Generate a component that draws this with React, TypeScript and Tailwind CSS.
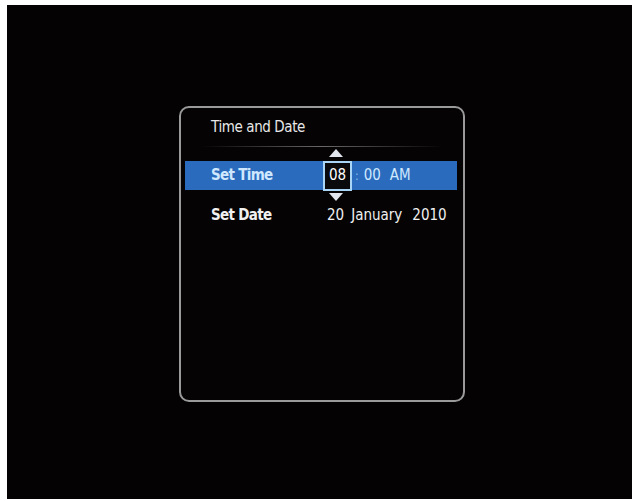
export default function App() {
  return (
    <div className="w-[637px] h-[501px] bg-white pl-[7px] pt-[5px]" style={{ fontFamily: '"DejaVu Sans Condensed", "DejaVu Sans", sans-serif' }}>
      <div className="w-[625px] h-[494px] bg-[#050203] pl-[172px] pt-[101px]">
        {/* ── Settings panel ── */}
        <div className="w-[286px] h-[296px] rounded-[10px] border-2 border-[#9a9a9a] bg-[#050304] flex flex-col">
          <div className="pl-[30px] pt-[9px] text-[15px] leading-[20px] text-[#e8e8e8] tracking-[-0.4px]">Time and Date</div>
          <div className="mx-[20px] mt-[9px] h-px bg-gradient-to-r from-transparent via-[#6a6a6a] to-transparent" />

          <div className="ml-[4px] mr-[6px] mt-[14px] h-[29px] bg-[#2a6bbd] flex items-center text-[#cfe8ff] text-[15px]">
            <span className="pl-[26px] w-[138px] font-semibold tracking-[-0.7px]">Set Time</span>
            <div className="relative">
              <div className="w-[29px] h-[30px] bg-[#0a0a0d] border-2 border-[#a9d5f7] flex items-center justify-center text-white">08</div>
              <svg className="absolute left-[5px] -top-[12px]" width="16" height="10" viewBox="0 0 16 10">
                <path d="M8 0 L15 8 L1 8 Z" fill="#e2e6ee" />
              </svg>
              <svg className="absolute left-[5px] -bottom-[11px]" width="16" height="10" viewBox="0 0 16 10">
                <path d="M1 1 L15 1 L8 9 Z" fill="#e2e6ee" />
              </svg>
            </div>
            <span className="ml-[3px] text-[#8fbbe6] text-[12px]">:</span>
            <span className="ml-[5px]">00</span>
            <span className="ml-[9px]">AM</span>
          </div>

          <div className="ml-[4px] mt-[14px] flex items-center text-[#f0f0f0] text-[15px]">
            <span className="pl-[26px] w-[142px] font-semibold tracking-[-0.7px]">Set Date</span>
            <span>20</span>
            <span className="ml-[7px]">January</span>
            <span className="ml-[10px]">2010</span>
          </div>
        </div>
      </div>
    </div>
  )
}
